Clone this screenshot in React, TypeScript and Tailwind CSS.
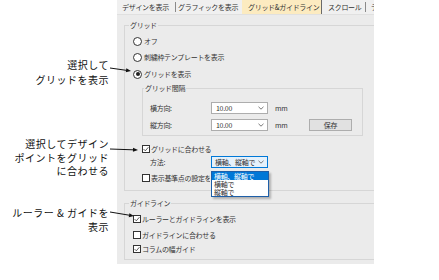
import React from "react";

const jp = "font-['Noto_Sans_CJK_JP',sans-serif]";

function Radio({ checked }: { checked?: boolean }) {
  return (
    <span className="w-[9px] h-[9px] rounded-full border border-[#333] bg-white flex items-center justify-center shrink-0">
      {checked && <span className="w-[4px] h-[4px] rounded-full bg-[#222]" />}
    </span>
  );
}

function Check({ checked }: { checked?: boolean }) {
  return (
    <span className="w-[8px] h-[8px] border border-[#333] bg-white flex items-center justify-center shrink-0">
      {checked && (
        <svg width="6" height="6" viewBox="0 0 6 6">
          <path d="M0.6 3.1 L2.3 4.8 L5.4 1.2" fill="none" stroke="#333" strokeWidth="0.8" />
        </svg>
      )}
    </span>
  );
}

function Chevron() {
  return (
    <svg width="6" height="4" viewBox="0 0 6 4" className="shrink-0">
      <path d="M0.5 0.8 L3 3.2 L5.5 0.8" fill="none" stroke="#555" strokeWidth="0.8" />
    </svg>
  );
}

function Arrow({ x1, y1, x2, y2 }: { x1: number; y1: number; y2: number; x2: number }) {
  const ang = Math.atan2(y2 - y1, x2 - x1);
  const L = 5;
  const W = 2;
  const bx = x2 - L * Math.cos(ang);
  const by = y2 - L * Math.sin(ang);
  const px = -Math.sin(ang) * W;
  const py = Math.cos(ang) * W;
  return (
    <g>
      <line x1={x1} y1={y1} x2={bx} y2={by} stroke="#111" strokeWidth="1" />
      <polygon points={`${x2},${y2} ${bx + px},${by + py} ${bx - px},${by - py}`} fill="#111" />
    </g>
  );
}

export default function App() {
  return (
    <div className={`relative w-[439px] h-[280px] bg-white flex ${jp}`}>
      {/* annotations */}
      <div className="w-[117px] shrink-0 flex flex-col items-end pr-[8px] text-[10px] tracking-[0.5px] text-[#111]">
        <div className="mt-[57px] leading-[15px] text-right">
          <div>選択して</div>
          <div>グリッドを表示</div>
        </div>
        <div className="mt-[50px] leading-[13.5px] text-right">
          <div>選択してデザイン</div>
          <div>ポイントをグリッド</div>
          <div>に合わせる</div>
        </div>
        <div className="mt-[28px] leading-[14px] text-right">
          <div>ルーラー &amp; ガイドを</div>
          <div>表示</div>
        </div>
      </div>

      {/* dialog panel */}
      <div className="w-[257px] h-[264px] bg-[#ebebeb] overflow-hidden flex flex-col text-[7px] tracking-[-0.3px] text-[#333] shrink-0">
        {/* tabs */}
        <div className="h-[15px] flex items-stretch bg-[#f0f0f0] border-b border-[#e0e0e0] shrink-0 overflow-hidden">
          <div className="w-[58px] flex items-center pl-[5px] whitespace-nowrap">デザインを表示</div>
          <div className="w-px my-[2px] bg-[#8a8a8a]" />
          <div className="w-[66px] flex items-center pl-[2px] whitespace-nowrap">グラフィックを表示</div>
          <div className="w-[79px] flex items-center pl-[6px] bg-[#fcebc0] whitespace-nowrap">グリッド&amp;ガイドライン</div>
          <div className="w-px bg-[#6a6a6a]" />
          <div className="w-[43px] flex items-center pl-[6px] whitespace-nowrap">スクロール</div>
          <div className="w-px my-[2px] bg-[#8a8a8a]" />
          <div className="w-[8px] flex items-center pl-[5px] whitespace-nowrap overflow-hidden">テ</div>
        </div>

        {/* grid group */}
        <fieldset className="mt-[5px] ml-[7px] w-[270px] border border-[#d6d6d6] pb-[6px] shrink-0">
          <legend className="ml-[4px] px-[1px] leading-[10px]">グリッド</legend>
          <div className="mt-[3px] h-[16px] flex items-center gap-[2px] ml-[8px]">
            <Radio />
            <span>オフ</span>
          </div>
          <div className="h-[16px] flex items-center gap-[2px] ml-[8px]">
            <Radio />
            <span>刺繍枠テンプレートを表示</span>
          </div>
          <div className="mt-[1px] h-[16px] flex items-center gap-[2px] ml-[8px]">
            <Radio checked />
            <span>グリッドを表示</span>
          </div>

          <fieldset className="mt-[1px] ml-[17px] w-[221px] border border-[#d6d6d6] pt-[9px] pb-[4px]">
            <legend className="ml-[1px] px-[1px] leading-[10px]">グリッド間隔</legend>
            <div className="h-[12px] flex items-center ml-[7px]">
              <span className="w-[61px]">横方向:</span>
              <span className="w-[57px] h-[12px] bg-white border border-[#adadad] flex items-center justify-between pl-[4px] pr-[3px]">
                <span>10.00</span>
                <Chevron />
              </span>
              <span className="ml-[7px]">mm</span>
            </div>
            <div className="mt-[5px] h-[12px] flex items-center ml-[7px]">
              <span className="w-[61px]">縦方向:</span>
              <span className="w-[57px] h-[12px] bg-white border border-[#adadad] flex items-center justify-between pl-[4px] pr-[3px]">
                <span>10.00</span>
                <Chevron />
              </span>
              <span className="ml-[7px] w-[34px]">mm</span>
              <span className="w-[43px] h-[12px] bg-[#e1e1e1] border border-[#adadad] flex items-center justify-center">保存</span>
            </div>
          </fieldset>

          <div className="mt-[7px] h-[12px] flex items-center gap-[1px] ml-[17px]">
            <Check checked />
            <span>グリッドに合わせる</span>
          </div>
          <div className="mt-[1px] h-[12px] flex items-center ml-[25px]">
            <span className="w-[61px]">方法:</span>
            <span className="relative w-[57px] h-[12px] bg-[#e5f1fb] border border-[#0078d7] flex items-center justify-between pl-[3px] pr-[3px]">
              <span>横軸、縦軸で</span>
              <Chevron />
              <div className="absolute left-[-1px] top-[14px] w-[58px] bg-white border border-[#1e5fa8] shadow-[2px_2px_2px_rgba(0,0,0,0.25)] flex flex-col z-10 leading-[8px]">
                <div className="bg-[#0078d7] text-white pl-[2px] h-[8px] leading-[8px] overflow-hidden">横軸、縦軸で</div>
                <div className="pl-[2px] h-[8px] leading-[8px] overflow-hidden">横軸で</div>
                <div className="pl-[2px] h-[8px] leading-[8px] overflow-hidden">縦軸で</div>
              </div>
            </span>
          </div>
          <div className="mt-[4px] h-[12px] flex items-center gap-[1px] ml-[17px] whitespace-nowrap">
            <Check />
            <span className="w-[59px] overflow-hidden">表示基準点の設定を表示</span>
          </div>
        </fieldset>

        {/* guide group */}
        <fieldset className="mt-[7px] ml-[7px] w-[270px] border border-[#d6d6d6] pb-[4px] shrink-0">
          <legend className="ml-[4px] px-[1px] leading-[10px]">ガイドライン</legend>
          <div className="mt-[5px] h-[12px] flex items-center gap-[1px] ml-[8px]">
            <Check checked />
            <span>ルーラーとガイドラインを表示</span>
          </div>
          <div className="mt-[4px] h-[12px] flex items-center gap-[1px] ml-[8px]">
            <Check />
            <span>ガイドラインに合わせる</span>
          </div>
          <div className="mt-[2px] h-[12px] flex items-center gap-[1px] ml-[8px]">
            <Check checked />
            <span>コラムの幅ガイド</span>
          </div>
        </fieldset>
      </div>

      {/* arrows overlay */}
      <svg className="absolute inset-0 pointer-events-none" width="439" height="280" viewBox="0 0 439 280">
        <Arrow x1={110} y1={68} x2={131} y2={71} />
        <Arrow x1={110} y1={149} x2={138} y2={150} />
        <Arrow x1={110} y1={212} x2={134} y2={216} />
      </svg>
    </div>
  );
}
